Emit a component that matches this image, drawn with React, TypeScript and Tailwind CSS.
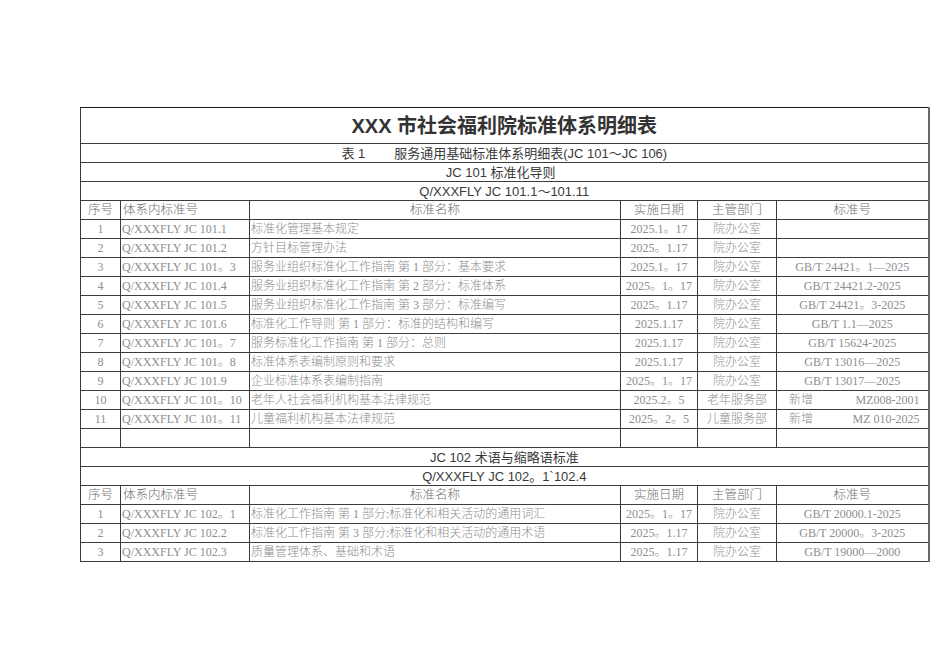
import React from "react";

type Row = {
  no: string;
  code: string;
  name: string;
  date: string;
  dept: string;
  std: string;
  extra?: string;
};

const section1: Row[] = [
  { no: "1", code: "Q/XXXFLY JC 101.1", name: "标准化管理基本规定", date: "2025.1。17", dept: "院办公室", std: "" },
  { no: "2", code: "Q/XXXFLY JC 101.2", name: "方针目标管理办法", date: "2025。1.17", dept: "院办公室", std: "" },
  { no: "3", code: "Q/XXXFLY JC 101。3", name: "服务业组织标准化工作指南 第 1 部分：基本要求", date: "2025.1。17", dept: "院办公室", std: "GB/T 24421。1—2025" },
  { no: "4", code: "Q/XXXFLY JC 101.4", name: "服务业组织标准化工作指南 第 2 部分：标准体系", date: "2025。1。17", dept: "院办公室", std: "GB/T 24421.2-2025" },
  { no: "5", code: "Q/XXXFLY JC 101.5", name: "服务业组织标准化工作指南 第 3 部分：标准编写", date: "2025。1.17", dept: "院办公室", std: "GB/T 24421。3-2025" },
  { no: "6", code: "Q/XXXFLY JC 101.6", name: "标准化工作导则 第 1 部分：标准的结构和编写", date: "2025.1.17", dept: "院办公室", std: "GB/T 1.1—2025" },
  { no: "7", code: "Q/XXXFLY JC 101。7", name: "服务标准化工作指南 第 1 部分：总则", date: "2025.1.17", dept: "院办公室", std: "GB/T 15624-2025" },
  { no: "8", code: "Q/XXXFLY JC 101。8", name: "标准体系表编制原则和要求", date: "2025.1.17", dept: "院办公室", std: "GB/T 13016—2025" },
  { no: "9", code: "Q/XXXFLY JC 101.9", name: "企业标准体系表编制指南", date: "2025。1。17", dept: "院办公室", std: "GB/T 13017—2025" },
  { no: "10", code: "Q/XXXFLY JC 101。10", name: "老年人社会福利机构基本法律规范", date: "2025.2。5", dept: "老年服务部", std: "MZ008-2001", extra: "新增" },
  { no: "11", code: "Q/XXXFLY JC 101。11", name: "儿童福利机构基本法律规范", date: "2025。2。5", dept: "儿童服务部", std: "MZ 010-2025", extra: "新增" },
];

const section2: Row[] = [
  { no: "1", code: "Q/XXXFLY JC 102。1", name: "标准化工作指南 第 1 部分:标准化和相关活动的通用词汇", date: "2025。1。17", dept: "院办公室", std: "GB/T 20000.1-2025" },
  { no: "2", code: "Q/XXXFLY JC 102.2", name: "标准化工作指南 第 3 部分:标准化和相关活动的通用术语", date: "2025。1.17", dept: "院办公室", std: "GB/T 20000。3-2025" },
  { no: "3", code: "Q/XXXFLY JC 102.3", name: "质量管理体系、基础和术语", date: "2025。1.17", dept: "院办公室", std: "GB/T 19000—2000" },
];

const cell = "border border-[#3c3c3c] p-0 h-[19px] leading-none whitespace-nowrap overflow-hidden";
const last = "border-r-2 border-r-[#6a6a6a]";

function SpanRow({ children }: { children: React.ReactNode }) {
  return (
    <tr>
      <td
        colSpan={6}
        className={`${cell} ${last} text-center text-[13px] text-[#3a3a3a] font-['Liberation_Sans','Noto_Sans_CJK_SC',sans-serif] whitespace-pre`}
      >
        {children}
      </td>
    </tr>
  );
}

function HeaderRow() {
  return (
    <tr className="text-[12.5px] text-[#707070] font-light">
      <td className={`${cell} text-center`}>序号</td>
      <td className={`${cell} pl-0.5`}>体系内标准号</td>
      <td className={`${cell} text-center`}>标准名称</td>
      <td className={`${cell} text-center`}>实施日期</td>
      <td className={`${cell} text-center`}>主管部门</td>
      <td className={`${cell} ${last} text-center`}>标准号</td>
    </tr>
  );
}

function DataRow({ r }: { r: Row }) {
  return (
    <tr className="text-[12px] text-[#8e8e8e] font-light">
      <td className={`${cell} text-center`}>{r.no}</td>
      <td className={`${cell} pl-[1px]`}>{r.code}</td>
      <td className={`${cell} pl-[1px]`}>{r.name}</td>
      <td className={`${cell} text-center`}>{r.date}</td>
      <td className={`${cell} text-center`}>{r.dept}</td>
      <td className={`${cell} ${last}`}>
        {r.extra ? (
          <div className="flex justify-between pl-3 pr-2">
            <span>{r.extra}</span>
            <span>{r.std}</span>
          </div>
        ) : (
          <div className="text-center">{r.std}</div>
        )}
      </td>
    </tr>
  );
}

function BlankRow() {
  return (
    <tr>
      <td className={cell}></td>
      <td className={cell}></td>
      <td className={cell}></td>
      <td className={cell}></td>
      <td className={cell}></td>
      <td className={`${cell} ${last}`}></td>
    </tr>
  );
}

export default function App() {
  return (
    <div className="w-[950px] h-[672px] bg-white pt-[107px] pl-[80px] font-['Liberation_Serif','Noto_Sans_CJK_SC',serif]">
      <table className="table-fixed border-collapse w-[848px]">
        <colgroup>
          <col className="w-[40px]" />
          <col className="w-[129px]" />
          <col className="w-[371px]" />
          <col className="w-[77px]" />
          <col className="w-[79px]" />
          <col className="w-[152px]" />
        </colgroup>
        <tbody>
          <tr>
            <td
              colSpan={6}
              className={`border border-[#3c3c3c] border-t-[#1a1a1a] ${last} h-[36px] text-center text-[20px] font-bold text-[#333] font-['Liberation_Sans','Noto_Sans_CJK_SC',sans-serif]`}
            >
              <span className="font-['Liberation_Sans_Narrow','Liberation_Sans',sans-serif]">XXX</span> 市社会福利院标准体系明细表
            </td>
          </tr>
          <SpanRow>{"表 1        服务通用基础标准体系明细表(JC 101～JC 106)"}</SpanRow>
          <SpanRow>{"JC 101 标准化导则  "}</SpanRow>
          <SpanRow>{"Q/XXXFLY JC 101.1～101.11"}</SpanRow>
          <HeaderRow />
          {section1.map((r) => (
            <DataRow key={"a" + r.no} r={r} />
          ))}
          <BlankRow />
          <SpanRow>{"JC 102 术语与缩略语标准"}</SpanRow>
          <SpanRow>{"Q/XXXFLY JC 102。1`102.4"}</SpanRow>
          <HeaderRow />
          {section2.map((r) => (
            <DataRow key={"b" + r.no} r={r} />
          ))}
        </tbody>
      </table>
    </div>
  );
}
